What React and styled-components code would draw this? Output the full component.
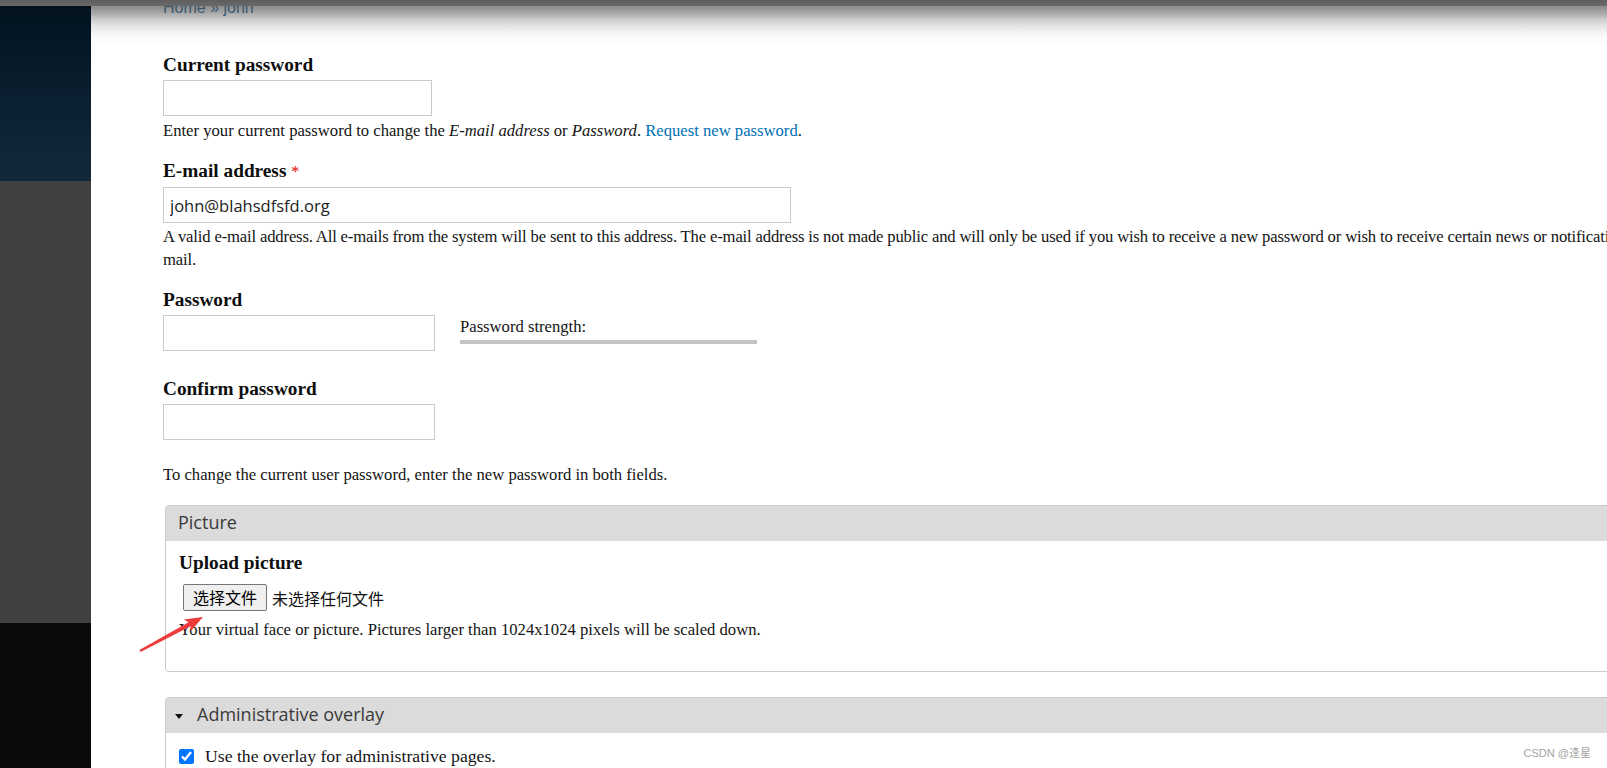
import React from 'react';
import styled, { createGlobalStyle } from 'styled-components';

const GlobalStyle = createGlobalStyle`
  html, body { margin: 0; padding: 0; background: #fff; overflow: hidden; }
  body { font-family: "Liberation Serif", "DejaVu Serif", serif; }
`;

const Page = styled.div`
  position: relative;
  display: flex;
  width: 1607px;
  height: 768px;
  overflow: hidden;
  background: #fff;
`;

const Sidebar = styled.aside`
  flex: 0 0 91px;
  display: flex;
  flex-direction: column;
`;

const SideBand = styled.div`
  flex: ${p => (p.$h ? `0 0 ${p.$h}px` : '1 1 auto')};
  background: ${p => p.$bg};
`;

const TopBand = styled.div`
  position: absolute;
  top: 0;
  left: 0;
  right: 0;
  height: 6px;
  background: linear-gradient(180deg, #5e5e5e, #6a6a6a);
  z-index: 5;
`;

const Main = styled.main`
  position: relative;
  flex: 1 1 auto;
  min-width: 0;
  padding-left: 72px;
  color: #141414;
  font-size: 16.65px;
`;

const ShadowFade = styled.div`
  position: absolute;
  top: 6px;
  left: 0;
  right: 0;
  height: 38px;
  pointer-events: none;
  z-index: 4;
  background: linear-gradient(
    180deg,
    rgba(90, 90, 90, 0.7) 0px,
    rgba(90, 90, 90, 0.53) 7px,
    rgba(90, 90, 90, 0.29) 14px,
    rgba(90, 90, 90, 0.14) 21px,
    rgba(90, 90, 90, 0.04) 30px,
    rgba(90, 90, 90, 0) 38px
  );
`;

const Breadcrumb = styled.nav`
  font-family: "Liberation Sans", Arial, sans-serif;
  font-size: 16px;
  line-height: 16px;
  height: 16px;
  color: #07558a;
`;

const Crumb = styled.a`
  color: #07558a;
  text-decoration: none;
`;

const Label = styled.label`
  display: block;
  font-weight: bold;
  font-size: 19.3px;
  line-height: 20px;
  color: #0e0e0e;
  margin-top: ${p => p.$mt || 0}px;
  margin-bottom: ${p => (p.$mb === undefined ? 5 : p.$mb)}px;
`;

const Required = styled.span`
  color: #e00000;
  font-weight: normal;
  font-size: 16px;
`;

const TextInput = styled.input`
  display: block;
  box-sizing: border-box;
  width: ${p => p.$w}px;
  height: 36px;
  margin: 0;
  border: 1px solid #cacaca;
  border-radius: 0;
  padding: 0 6px;
  background: #fff;
  font-family: "Open Sans", "Noto Sans", sans-serif;
  font-size: 16.5px;
  color: #222;
  outline: none;
`;

const Description = styled.div`
  margin-top: ${p => (p.$mt === undefined ? 3 : p.$mt)}px;
  line-height: 23px;
  white-space: nowrap;
  letter-spacing: ${p => p.$ls || 0}px;
`;

const Line = styled.span`
  display: block;
`;

const Link = styled.a`
  color: #0071b3;
  text-decoration: none;
`;

const PasswordRow = styled.div`
  display: flex;
  align-items: flex-start;
`;

const Strength = styled.div`
  margin-left: 25px;
  padding-top: 2px;
  width: 297px;
`;

const StrengthText = styled.div`
  line-height: 20px;
`;

const StrengthBar = styled.div`
  margin-top: 3px;
  height: 4px;
  background: #c3c3c3;
`;

const Plain = styled.p`
  margin: ${p => p.$mt}px 0 0;
  line-height: 23px;
`;

const Fieldset = styled.section`
  box-sizing: border-box;
  width: 1600px;
  margin: ${p => p.$mt}px 0 0 2px;
  border: 1px solid #cbcbcb;
  border-radius: 4px;
  overflow: hidden;
`;

const Legend = styled.div`
  box-sizing: border-box;
  display: flex;
  align-items: center;
  height: 35px;
  padding: 0 0 3px ${p => p.$pl}px;
  background: #dbdbdb;
  font-family: "Open Sans", "Noto Sans", sans-serif;
  font-size: 18px;
  color: #3a3a3a;
`;

const Caret = styled.span`
  width: 0;
  height: 0;
  border-left: 4px solid transparent;
  border-right: 4px solid transparent;
  border-top: 5px solid #111;
  margin-right: 14px;
  margin-top: 4px;
`;

const FieldsetBody = styled.div`
  padding: 12px 13px ${p => p.$pb}px;
`;

const FileRow = styled.div`
  display: flex;
  align-items: center;
  height: 27px;
  font-family: "Noto Sans CJK SC", "Noto Sans", sans-serif;
  font-size: 16px;
  color: #111;
`;

const FileButton = styled.button`
  box-sizing: border-box;
  height: 27px;
  padding: 0 9px;
  margin: 0 0 0 4px;
  background: #efefef;
  border: 1px solid #767676;
  border-radius: 2px;
  font-family: inherit;
  font-size: 16px;
  line-height: 25px;
  color: #000;
`;

const FileName = styled.span`
  margin-left: 5px;
`;

const CheckRow = styled.label`
  display: flex;
  align-items: center;
  height: 22px;
  gap: 11px;
  font-size: 17.7px;
`;

const Checkbox = styled.input`
  margin: 0;
  width: 15px;
  height: 15px;
  accent-color: #0075ff;
`;

const Watermark = styled.div`
  position: absolute;
  right: 16px;
  top: 745px;
  font-family: "Liberation Sans", "Noto Sans CJK SC", sans-serif;
  font-size: 11px;
  line-height: 16px;
  color: #a3a3a3;
  z-index: 6;
`;

const ArrowSvg = styled.svg`
  position: absolute;
  left: 130px;
  top: 605px;
  z-index: 6;
`;

export default function App() {
  return (
    <>
      <GlobalStyle />
      <Page>
        <TopBand />
        <Sidebar>
          <SideBand $h={181} $bg="linear-gradient(180deg, #01111d 0%, #0a1f30 55%, #13293a 100%)" />
          <SideBand $h={442} $bg="#404040" />
          <SideBand $bg="#0a0a0a" />
        </Sidebar>
        <Main>
          <ShadowFade />
          <Breadcrumb>
            <Crumb href="#">Home</Crumb> » <Crumb href="#">john</Crumb>
          </Breadcrumb>

          <Label $mt={39}>Current password</Label>
          <TextInput type="password" $w={269} />
          <Description>
            Enter your current password to change the <em>E-mail address</em> or <em>Password</em>.{' '}
            <Link href="#">Request new password</Link>.
          </Description>

          <Label $mt={19}>
            E-mail address <Required>*</Required>
          </Label>
          <TextInput type="text" $w={628} defaultValue="john@blahsdfsfd.org" />
          <Description $mt={2} $ls={-0.16}>
            <Line>
              A valid e-mail address. All e-mails from the system will be sent to this address. The e-mail address is not made public and will only be used if you wish to receive a new password or wish to receive certain news or notifications by e-
            </Line>
            <Line>mail.</Line>
          </Description>

          <Label $mt={19}>Password</Label>
          <PasswordRow>
            <TextInput type="password" $w={272} />
            <Strength>
              <StrengthText>Password strength:</StrengthText>
              <StrengthBar />
            </Strength>
          </PasswordRow>

          <Label $mt={28}>Confirm password</Label>
          <TextInput type="password" $w={272} />

          <Plain $mt={23}>To change the current user password, enter the new password in both fields.</Plain>

          <Fieldset $mt={19}>
            <Legend $pl={12}>Picture</Legend>
            <FieldsetBody $pb={30}>
              <Label $mb={11}>Upload picture</Label>
              <FileRow>
                <FileButton type="button">选择文件</FileButton>
                <FileName>未选择任何文件</FileName>
              </FileRow>
              <Description $mt={7}>
                Your virtual face or picture. Pictures larger than 1024x1024 pixels will be scaled down.
              </Description>
            </FieldsetBody>
          </Fieldset>

          <Fieldset $mt={25}>
            <Legend $pl={9}>
              <Caret />
              Administrative overlay
            </Legend>
            <FieldsetBody $pb={20}>
              <CheckRow>
                <Checkbox type="checkbox" defaultChecked />
                Use the overlay for administrative pages.
              </CheckRow>
            </FieldsetBody>
          </Fieldset>
        </Main>

        <ArrowSvg width="85" height="55" viewBox="0 0 85 55">
          <polygon
            points="73,12 60.5,26.5 60.6,21.2 10.6,47 9.4,45 58.6,17.2 53.8,14.6"
            fill="#ee3b3b"
          />
        </ArrowSvg>

        <Watermark>CSDN @逢星</Watermark>
      </Page>
    </>
  );
}
